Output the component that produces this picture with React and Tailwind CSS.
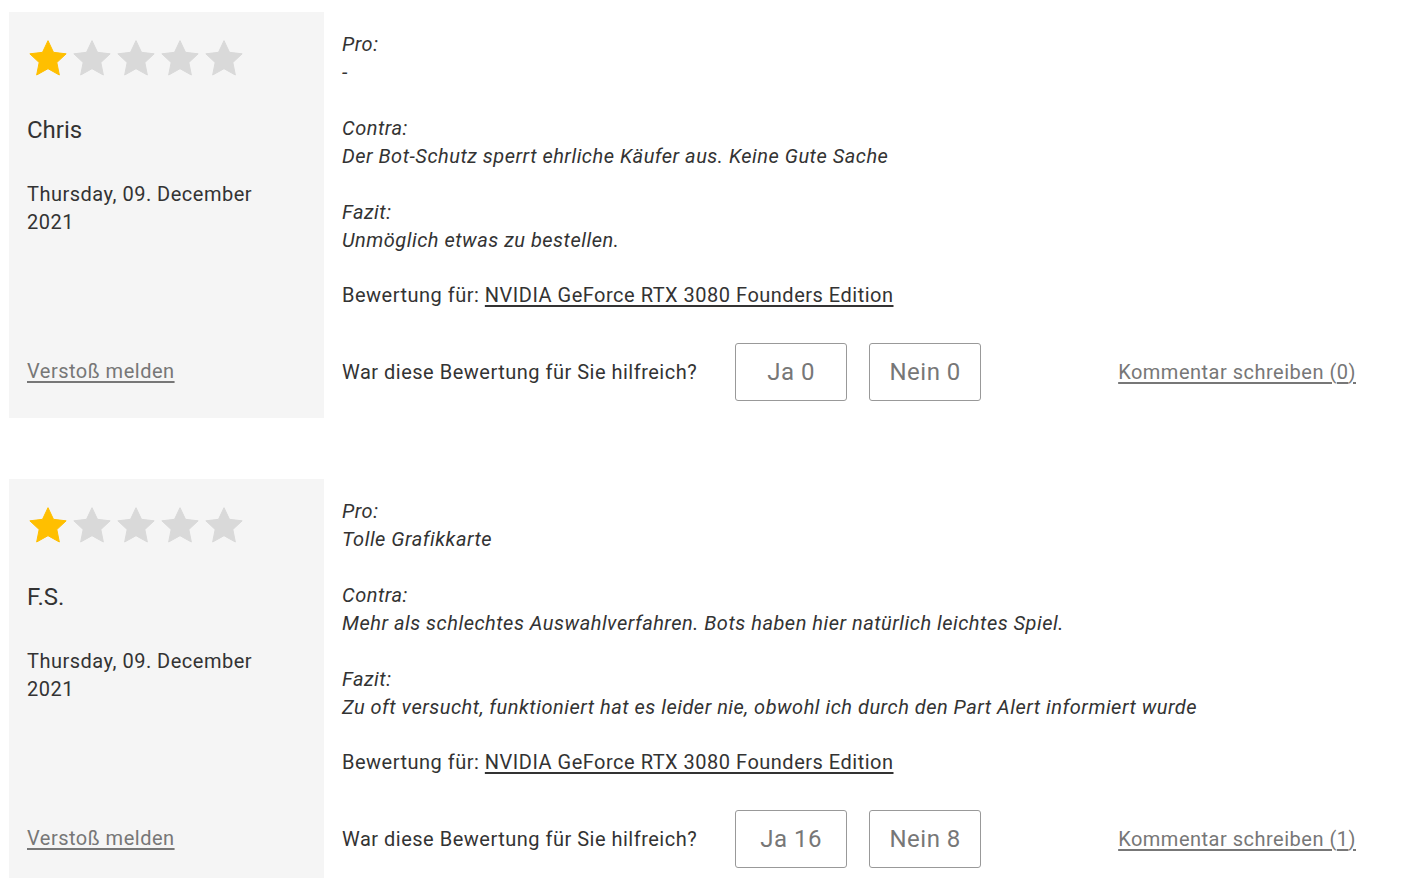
import React from 'react';

const Star = ({ filled }) => (
  <svg width="40" height="39" viewBox="0 0 24 23" className="shrink-0">
    <path
      d="M12 0.8l3.3 7 7.6 0.9-5.6 5.2 1.5 7.5L12 17.6 5.2 21.4l1.5-7.5L1.1 8.7l7.6-0.9z"
      fill={filled ? '#ffbf00' : '#d9d9d9'}
      stroke={filled ? '#ffbf00' : '#d9d9d9'}
      strokeWidth="0.6"
      strokeLinejoin="round"
    />
  </svg>
);

const Block = ({ label, value }) => (
  <div className="mb-[28px] italic">
    <div>{label}</div>
    <div>{value}</div>
  </div>
);

const Review = ({ name, pro, contra, fazit, ja, nein, comments }) => (
  <div className="flex">
    {/* Left info column */}
    <div className="w-[315px] shrink-0 bg-[#f5f5f5] px-[18px] pt-[27px] pb-[18px] flex flex-col">
      <div className="flex gap-[4px] ml-[1px]">
        {[0, 1, 2, 3, 4].map((i) => (
          <Star key={i} filled={i === 0} />
        ))}
      </div>
      <div className="text-[24px] leading-[32px] mt-[36px] tracking-normal">{name}</div>
      <div className="mt-[34px] leading-[28px]">
        Thursday, 09. December
        <br />
        2021
      </div>
      <div className="mt-auto h-[58px] flex items-center">
        <a href="#" className="text-[#777] underline underline-offset-[3px]">
          Verstoß melden
        </a>
      </div>
    </div>

    {/* Review content */}
    <div className="flex-1 px-[18px] pt-[18px] pb-[17px] leading-[28px]">
      <Block label="Pro:" value={pro} />
      <Block label="Contra:" value={contra} />
      <Block label="Fazit:" value={fazit} />
      <div className="-mt-[1px]">
        Bewertung für:{' '}
        <a href="#" className="underline underline-offset-[3px]">
          NVIDIA GeForce RTX 3080 Founders Edition
        </a>
      </div>
      <div className="flex items-center mt-[34px]">
        <span>War diese Bewertung für Sie hilfreich?</span>
        <button className="ml-[38px] w-[112px] h-[58px] border border-[#999] rounded-[3px] text-[24px] text-[#777]">
          Ja {ja}
        </button>
        <button className="ml-[22px] w-[112px] h-[58px] border border-[#999] rounded-[3px] text-[24px] text-[#777]">
          Nein {nein}
        </button>
        <a href="#" className="ml-auto text-[#777] underline underline-offset-[3px]">
          Kommentar schreiben ({comments})
        </a>
      </div>
    </div>
  </div>
);

export default function App() {
  return (
    <div
      className="bg-white min-h-screen pl-[9px] pr-[34px] pt-[12px] text-[20px] tracking-[0.5px] text-[#333] flex flex-col gap-[61px]"
      style={{ fontFamily: 'Roboto, "Liberation Sans", sans-serif' }}
    >
      <Review
        name="Chris"
        pro="-"
        contra="Der Bot-Schutz sperrt ehrliche Käufer aus. Keine Gute Sache"
        fazit="Unmöglich etwas zu bestellen."
        ja={0}
        nein={0}
        comments={0}
      />
      <Review
        name="F.S."
        pro="Tolle Grafikkarte"
        contra="Mehr als schlechtes Auswahlverfahren. Bots haben hier natürlich leichtes Spiel."
        fazit="Zu oft versucht, funktioniert hat es leider nie, obwohl ich durch den Part Alert informiert wurde"
        ja={16}
        nein={8}
        comments={1}
      />
    </div>
  );
}
